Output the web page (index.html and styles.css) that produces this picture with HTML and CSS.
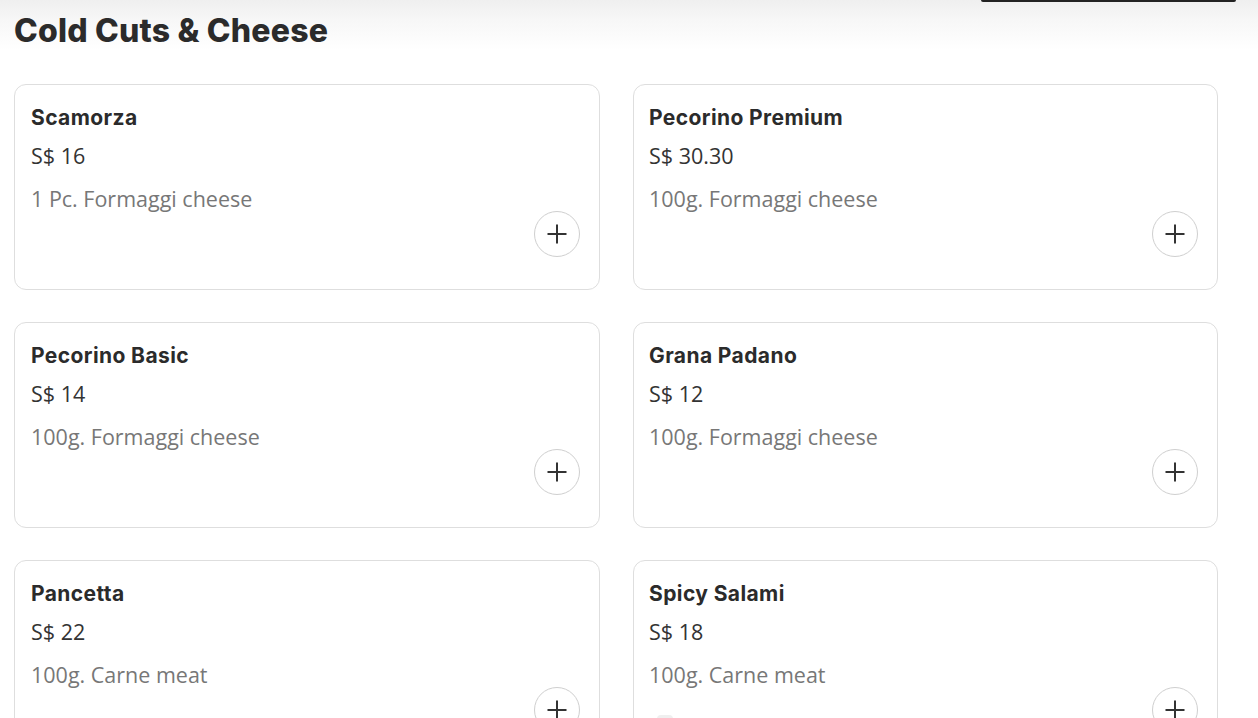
FILE: index.html
```html
<!DOCTYPE html>
<html lang="en">
<head>
<meta charset="utf-8">
<title>Cold Cuts &amp; Cheese</title>
<link rel="stylesheet" href="styles.css">
</head>
<body>
<div class="topbar"><div class="topbar-btn"></div></div>
<main class="page">
  <h2 class="section-title">Cold Cuts &amp; Cheese</h2>
  <div class="grid">
    <div class="card">
      <div class="name">Scamorza</div>
      <div class="price">S$ 16</div>
      <div class="desc">1 Pc. Formaggi cheese</div>
      <div class="card-foot"><button class="add" aria-label="Add"><svg viewBox="0 0 20 20" width="20" height="20"><path d="M10 0.5V19.5M0.5 10H19.5" stroke="#333" stroke-width="2" fill="none"/></svg></button></div>
    </div>
    <div class="card">
      <div class="name">Pecorino Premium</div>
      <div class="price">S$ 30.30</div>
      <div class="desc">100g. Formaggi cheese</div>
      <div class="card-foot"><button class="add" aria-label="Add"><svg viewBox="0 0 20 20" width="20" height="20"><path d="M10 0.5V19.5M0.5 10H19.5" stroke="#333" stroke-width="2" fill="none"/></svg></button></div>
    </div>
    <div class="card">
      <div class="name">Pecorino Basic</div>
      <div class="price">S$ 14</div>
      <div class="desc">100g. Formaggi cheese</div>
      <div class="card-foot"><button class="add" aria-label="Add"><svg viewBox="0 0 20 20" width="20" height="20"><path d="M10 0.5V19.5M0.5 10H19.5" stroke="#333" stroke-width="2" fill="none"/></svg></button></div>
    </div>
    <div class="card">
      <div class="name">Grana Padano</div>
      <div class="price">S$ 12</div>
      <div class="desc">100g. Formaggi cheese</div>
      <div class="card-foot"><button class="add" aria-label="Add"><svg viewBox="0 0 20 20" width="20" height="20"><path d="M10 0.5V19.5M0.5 10H19.5" stroke="#333" stroke-width="2" fill="none"/></svg></button></div>
    </div>
    <div class="card">
      <div class="name">Pancetta</div>
      <div class="price">S$ 22</div>
      <div class="desc">100g. Carne meat</div>
      <div class="card-foot"><button class="add" aria-label="Add"><svg viewBox="0 0 20 20" width="20" height="20"><path d="M10 0.5V19.5M0.5 10H19.5" stroke="#333" stroke-width="2" fill="none"/></svg></button></div>
    </div>
    <div class="card">
      <div class="name">Spicy Salami</div>
      <div class="price">S$ 18</div>
      <div class="desc">100g. Carne meat</div>
      <div class="card-foot"><span class="tag"></span><button class="add" aria-label="Add"><svg viewBox="0 0 20 20" width="20" height="20"><path d="M10 0.5V19.5M0.5 10H19.5" stroke="#333" stroke-width="2" fill="none"/></svg></button></div>
    </div>
  </div>
</main>
</body>
</html>
```
FILE: styles.css
```css
html, body {
  margin: 0;
  padding: 0;
  background: #fff;
}
body {
  font-family: "Open Sans", "Liberation Sans", sans-serif;
  color: #333;
  overflow: hidden;
}
.topbar {
  position: absolute;
  top: 0;
  left: 0;
  right: 0;
  height: 50px;
  background: linear-gradient(to bottom, #efefef 0%, #f7f7f7 40%, #ffffff 100%);
  z-index: 0;
}
.topbar-btn {
  position: absolute;
  top: 0;
  left: 981px;
  width: 255px;
  height: 2px;
  background: #222;
  border-radius: 0 0 3px 3px;
}
.page {
  position: relative;
  z-index: 1;
  padding: 0 41px 0 14px;
}
.section-title {
  margin: 0;
  padding-top: 12px;
  height: 84px;
  box-sizing: border-box;
  font-family: Inter, "Liberation Sans", sans-serif;
  font-weight: 800;
  font-size: 32px;
  line-height: 38px;
  letter-spacing: 0.2px;
  color: #2b2b2b;
}
.grid {
  display: grid;
  grid-template-columns: 586px 585px;
  column-gap: 33px;
  row-gap: 32px;
}
.card {
  border: 1px solid #dedede;
  border-radius: 12px;
  padding: 20px 19px 30px 16px;
  height: 206px;
  box-sizing: border-box;
  display: flex;
  flex-direction: column;
  background: #fff;
}
.card:nth-child(even) {
  padding-left: 15px;
}
.name {
  font-family: Inter, "Liberation Sans", sans-serif;
  font-weight: 700;
  font-size: 21px;
  line-height: 26px;
  letter-spacing: 0.4px;
  color: #2b2b2b;
}
.price {
  margin-top: 12px;
  font-size: 21.5px;
  line-height: 26px;
  color: #333;
}
.desc {
  margin-top: 16px;
  font-size: 21.5px;
  line-height: 28px;
  color: #777;
}
.card-foot {
  display: flex;
  justify-content: flex-end;
  margin-top: -2px;
}
.tag {
  margin-right: auto;
  margin-left: 8px;
  margin-top: 28px;
  width: 16px;
  height: 16px;
  border-radius: 4px;
  background: #efefef;
}
.add {
  width: 46px;
  height: 46px;
  border-radius: 50%;
  border: 1px solid #cfcfcf;
  background: #fff;
  padding: 0;
  display: flex;
  align-items: center;
  justify-content: center;
  cursor: pointer;
}
.add svg {
  display: block;
}
```
